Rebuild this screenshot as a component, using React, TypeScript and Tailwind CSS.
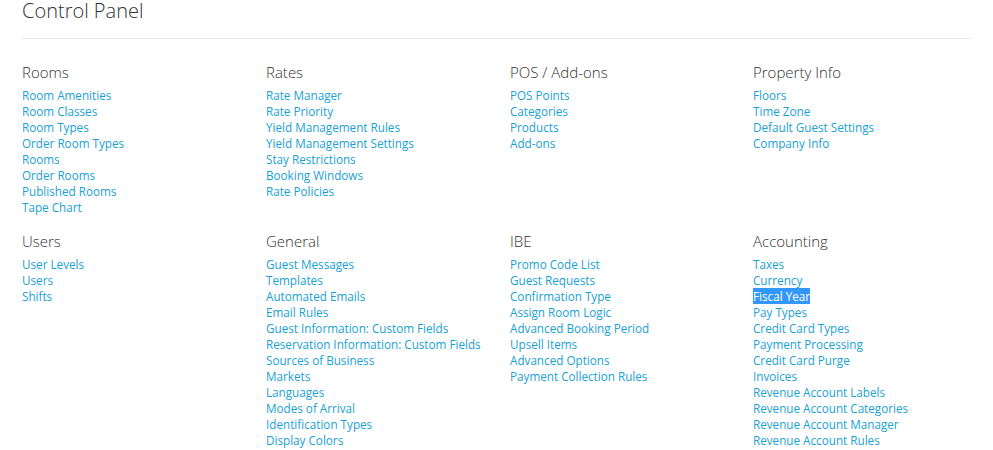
import React from "react";

type Section = { title: string; links: string[] };

const topRow: Section[] = [
  {
    title: "Rooms",
    links: [
      "Room Amenities",
      "Room Classes",
      "Room Types",
      "Order Room Types",
      "Rooms",
      "Order Rooms",
      "Published Rooms",
      "Tape Chart",
    ],
  },
  {
    title: "Rates",
    links: [
      "Rate Manager",
      "Rate Priority",
      "Yield Management Rules",
      "Yield Management Settings",
      "Stay Restrictions",
      "Booking Windows",
      "Rate Policies",
    ],
  },
  {
    title: "POS / Add-ons",
    links: ["POS Points", "Categories", "Products", "Add-ons"],
  },
  {
    title: "Property Info",
    links: ["Floors", "Time Zone", "Default Guest Settings", "Company Info"],
  },
];

const bottomRow: Section[] = [
  { title: "Users", links: ["User Levels", "Users", "Shifts"] },
  {
    title: "General",
    links: [
      "Guest Messages",
      "Templates",
      "Automated Emails",
      "Email Rules",
      "Guest Information: Custom Fields",
      "Reservation Information: Custom Fields",
      "Sources of Business",
      "Markets",
      "Languages",
      "Modes of Arrival",
      "Identification Types",
      "Display Colors",
    ],
  },
  {
    title: "IBE",
    links: [
      "Promo Code List",
      "Guest Requests",
      "Confirmation Type",
      "Assign Room Logic",
      "Advanced Booking Period",
      "Upsell Items",
      "Advanced Options",
      "Payment Collection Rules",
    ],
  },
  {
    title: "Accounting",
    links: [
      "Taxes",
      "Currency",
      "Fiscal Year",
      "Pay Types",
      "Credit Card Types",
      "Payment Processing",
      "Credit Card Purge",
      "Invoices",
      "Revenue Account Labels",
      "Revenue Account Categories",
      "Revenue Account Manager",
      "Revenue Account Rules",
    ],
  },
];

function SectionBlock({ section }: { section: Section }) {
  return (
    <div>
      <h3 className="text-[15px] leading-[20px] font-light text-[#333]">
        {section.title}
      </h3>
      <ul className="mt-[5px]">
        {section.links.map((link) => (
          <li key={link} className="text-[11.7px] leading-[16px]">
            {link === "Fiscal Year" ? (
              <a className="bg-[#3297fd] text-white">{link}</a>
            ) : (
              <a className="text-[#1a9fd6]">{link}</a>
            )}
          </li>
        ))}
      </ul>
    </div>
  );
}

export default function App() {
  return (
    <div
      className="w-[993px] h-[450px] overflow-hidden bg-white px-[22px]"
      style={{ fontFamily: '"Open Sans", sans-serif' }}
    >
      <h1 className="text-[20px] leading-[22px] font-light text-[#333]">
        Control Panel
      </h1>
      <hr className="mt-[16px] w-[949px] border-t border-[#e8e8e8]" />

      <div className="mt-[23px] grid grid-cols-[244px_244px_243px_244px]">
        {topRow.map((s) => (
          <SectionBlock key={s.title} section={s} />
        ))}
      </div>

      <div className="mt-[16px] grid grid-cols-[244px_244px_243px_244px]">
        {bottomRow.map((s) => (
          <SectionBlock key={s.title} section={s} />
        ))}
      </div>
    </div>
  );
}
